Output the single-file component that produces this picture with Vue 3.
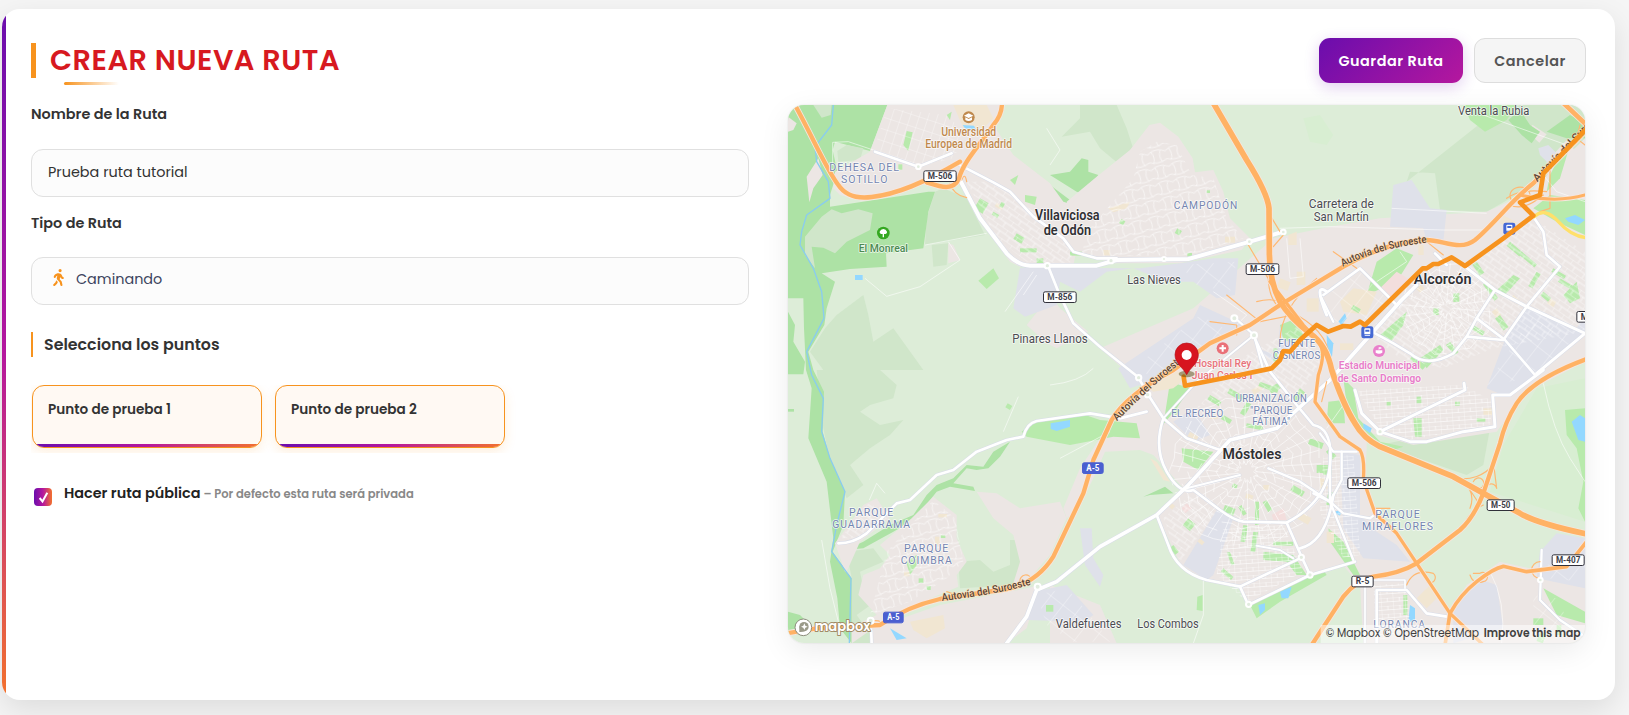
<script setup>
const points = ['Punto de prueba 1', 'Punto de prueba 2']

// All map geometry shares one coordinate space: three units per screen pixel.
const areas = [
  // pale woodland
  ['soft', '440,370 465,290 490,280 560,310 615,420 435,450'],
  ['soft', '455,450 505,445 500,510 460,515'],
  ['soft', '130,825 430,825 340,700 280,740 265,660 250,600 170,660 135,700 90,770'],
  ['soft', '110,825 300,825 350,870 340,910 270,930 240,950 300,990 370,975 330,1020 270,1060 210,1110 250,1170 200,1210 150,1100 130,1000'],
  ['soft', '900,30 1010,30 1040,100 1058,155 1020,210 960,160 930,110 845,125 900,70'],
  ['soft', '1880,260 2095,90 2220,30 2415,30 2415,170 2280,260 2120,350 1980,345 1965,235 1890,230'],
  ['soft', '535,1400 600,1395 640,1430 690,1410 690,1335 790,1335 780,1380 720,1470 540,1480'],
  ['soft', '200,1370 280,1360 310,1400 240,1430 250,1480 300,1510 230,1560 290,1645 215,1645 215,1450'],
  ['soft', '1800,1050 1990,1010 2130,1000 2110,1110 2060,1140'],
  // forest
  ['forest', '24,30 322,30 270,168 165,140 158,165 172,230 150,300 150,335 445,290 465,290 445,350 430,460 318,475 320,515 210,522 125,535 165,560 140,640 133,690 85,770 100,825 132,890 128,1010 150,1090 195,1190 190,1290 158,1370 215,1450 215,1645 180,1600 172,1510 150,1400 160,1330 140,1160 85,1030 95,880 78,825 72,700 70,610 24,610'],
  ['forest', '24,650 45,690 40,740 75,800 70,838 24,838'],
  ['forest', '24,1550 60,1560 90,1590 75,1620 24,1620'],
  ['forest', '24,942 42,942 42,950 24,950'],
  ['soft', '75,425 125,365 155,343 185,355 235,343 278,355 270,405 200,440 165,475 130,458 95,455 105,520 75,480'],
  ['soft', '172,168 200,150 250,160 240,195 175,200'],
  ['soft', '100,30 155,30 152,60 125,68'],
  ['urban', '80,245 115,190 128,240 100,280 88,322'],
  ['urban', '24,65 50,85 40,105 24,110'],
  ['forest', '810,240 870,230 905,190 925,195 925,230 955,240 935,270 940,305 890,290'],
  ['forest', '810,270 870,315 940,300 1000,280 1020,300 1085,295 1020,335 970,380 905,450 880,430 925,380 900,340 840,320'],
  ['forest', '195,1365 250,1340 330,1290 400,1260 440,1200 470,1170 520,1150 560,1110 610,1115 640,1070 690,1040 660,1085 625,1120 590,1125 560,1120 520,1165 580,1175 585,1188 510,1175 470,1190 430,1240 400,1275 340,1310 250,1360'],
  // built-up land
  ['urban', '322,30 665,30 640,90 700,180 765,230 810,265 850,320 930,345 895,445 880,510 720,515 690,500 600,380 545,260 480,240 350,290 285,300 250,318 180,300 160,280 165,230 270,170'],
  ['urban', '860,320 950,245 1050,165 1108,90 1140,83 1195,125 1238,190 1245,232 1300,225 1330,290 1350,370 1410,430 1385,465 1200,505 1000,505 890,470'],
  ['urban', '875,325 960,240 1060,165 1000,320 930,380'],
  ['urban', '165,1345 250,1230 290,1210 330,1270 240,1340 200,1430 215,1440 195,1430'],
  ['urban', '300,1350 395,1270 460,1205 530,1260 530,1330 560,1400 530,1440 535,1475 380,1540 280,1600 215,1645 215,1595 290,1560 235,1500 250,1440 300,1420 330,1380'],
  ['urban', '280,1600 480,1530 740,1480 780,1470 740,1600 680,1645 270,1645'],
  ['urban', '590,1190 650,1195 720,1240 840,1220 860,1270 810,1380 740,1460 700,1465 720,1400 700,1320 640,1270'],
  ['urban', '740,690 780,640 810,600 840,640 925,710 830,760 800,745'],
  ['urban', '1240,640 1480,430 1650,395 1800,370 2120,350 2250,290 2415,130 2415,800 2240,890 2150,1010 1900,1050 1760,1010 1760,1060 1740,1390 1590,1440 1405,1535 1375,1475 1280,1460 1205,1415 1150,1300 1130,1260 1215,1185 1120,1080 1080,1065 975,1070 940,1150 895,1240 860,1270 850,1240 900,1120 960,1030 1060,930 1095,880 960,760'],
  ['urban', '1720,1060 1780,1240 1900,1390 2010,1550 2060,1470 2160,1400 2250,1420 2415,1330 2415,1645 1750,1645 1740,1470 1680,1400 1620,1430 1640,1200'],
  ['urban', '2300,200 2360,135 2395,180 2415,240 2415,270 2330,300 2305,270'],
  ['urban', '2235,105 2258,90 2300,118 2278,143'],
  ['urban', '810,1470 960,1530 1010,1645 810,1645'],
  ['urban', '505,445 520,450 540,495 505,505'],
  // commerce
  ['work', '720,518 1080,520 1200,505 1300,490 1375,490 1365,600 1310,610 1240,560 1160,560 1060,520 980,530 900,590 840,560 830,630 735,665 700,640'],
  ['work', '1015,820 1240,670 1260,630 1390,690 1220,790 1110,860 1050,880'],
  ['work', '760,1490 860,1470 940,1560 910,1580 740,1575'],
  ['work', '900,1300 935,1300 940,1390 970,1440 960,1475 915,1410'],
  ['work', '1210,1410 1310,1245 1360,1270 1300,1440 1280,1455'],
  ['work', '1180,980 1240,940 1290,1020 1240,1040'],
  ['work', '1840,270 1895,255 1950,340 2000,345 1990,440 1940,440 1930,400 1830,395'],
  ['work', '2180,720 2240,640 2390,700 2415,660 2415,710 2270,840 2180,905 2120,880'],
  ['work', '1680,1070 1740,1080 1740,1260 1790,1310 1850,1350 1890,1400 1750,1390 1690,1300'],
  ['work', '2280,1370 2330,1315 2415,1330 2415,1480 2270,1450'],
  ['work', '2020,1520 2090,1450 2150,1470 2170,1600 2020,1645'],
  ['work', '2275,160 2305,150 2330,175 2305,205 2280,180'],
  ['work', '1430,760 1490,780 1500,690 1560,680 1570,740 1480,800'],
  // parks
  ['park', '2050,30 2210,30 2180,75 2115,110 2070,75'],
  ['forest', '2185,75 2220,45 2250,90 2280,110 2255,145 2225,120'],
  ['forest', '2300,110 2370,60 2415,85 2415,130 2360,130'],
  ['park', '2310,300 2415,315 2415,420 2330,380 2260,340'],
  ['park', '2310,240 2345,170 2370,150 2340,250 2300,290'],
  ['park', '595,557 640,520 657,550 620,582'],
  ['park', '725,1010 760,980 900,955 960,975 1070,985 1080,1030 1000,1025 870,1050 740,1025'],
  ['park', '1205,1060 1300,1070 1255,1125 1210,1100'],
  ['park', '378,1400 410,1380 410,1410 390,1440'],
  ['forest', '1090,1205 1155,1175 1180,1195 1110,1200'],
  ['park', '1410,1530 1630,1425 1640,1440 1500,1520 1430,1570'],
  ['park', '1450,1370 1540,1380 1580,1440 1550,1440 1520,1400 1450,1395'],
  ['park', '1252,1505 1268,1500 1268,1548 1250,1545'],
  ['park', '1645,920 1690,915 1695,985 1640,985'],
  ['park', '1690,850 1720,880 1735,970 1800,1040 1870,1055 1840,1065 1760,1020 1700,930'],
  ['park', '2355,945 2415,940 2415,1280 2395,1240 2410,1160 2390,1060 2360,1020'],
  ['park', '2290,1480 2415,1550 2415,1585 2330,1560'],
  ['park', '1645,1300 1690,1340 1740,1440 1720,1440 1650,1340'],
  ['park', '1500,690 1550,670 1570,720 1540,745 1510,735'],
  ['park', '1760,600 1790,500 1850,460 1900,480 1850,560'],
  ['park', '2350,600 2390,560 2400,610 2370,625'],
  ['park', '1800,720 1880,650 1870,690 1830,745'],
  ['park', '2145,590 2200,540 2220,550 2170,605'],
  ['park', '1920,790 1980,750 1990,765 1940,820'],
  ['park', '1140,1000 1150,990 1170,860 1230,880 1190,940'],
  ['park', '370,150 380,108 398,112 385,168'],
  ['park', '735,300 770,305 765,330 735,320'],
  ['park', '500,60 515,50 510,75'],
  ['park', '690,255 715,240 705,270'],
  ['park', '1900,970 1925,970 1925,1025 1905,1025'],
  // sand and leisure
  ['sand', '520,30 620,30 640,70 600,110 550,100'],
  ['sand', '390,1580 490,1560 495,1600 440,1630 400,1605'],
  ['sand', '1680,620 1720,580 1790,590 1760,660 1690,650'],
  ['sand', '1910,1510 1950,1470 1970,1510 1940,1540'],
  ['sand', '985,340 1050,320 1040,340 1000,352'],
  ['sand', '1525,420 1550,410 1550,450 1525,450'],
  ['sand', '1090,870 1180,825 1230,840 1180,880 1120,890'],
  ['sand', '1110,1090 1130,1100 1170,1160 1150,1155'],
  ['clinic', '1800,580 1850,530 1900,560 1830,620'],
  ['clinic', '1475,1260 1510,1240 1520,1275 1480,1275'],
  ['clinic', '1205,1240 1220,1225 1235,1240 1215,1255'],
  // water
  ['water', '225,540 248,540 248,555 225,555'],
  ['water', '548,90 582,92 590,108 555,100'],
  ['water', '812,985 870,975 870,995 830,1008 812,1002'],
  ['water', '1435,1530 1455,1525 1455,1545 1440,1560'],
  ['water', '1500,1490 1535,1475 1525,1510 1505,1510'],
  ['water', '2375,980 2400,960 2415,970 2415,1040 2395,1035'],
  ['water', '2355,370 2385,360 2415,375 2395,390 2365,380'],
  ['water', '1640,720 1660,745 1655,795 1642,780'],
  ['water', '1675,680 1695,655 1700,670 1685,690'],
  ['water', '1890,1530 1905,1540 1905,1580 1885,1580'],
  ['water', '330,1600 380,1630 350,1635'],
  ['water', '1750,985 1775,1000 1770,1015 1750,1000'],
  ['water', '1660,1250 1685,1245 1680,1262'],
]

const grids = [
  ['gA', '322,40 500,60 560,120 520,190 420,215 280,165'],
  ['gB', '560,260 640,260 790,370 880,460 870,505 740,500 650,430'],
  ['gC', '1060,250 1080,170 1130,140 1190,150 1235,240 1300,250 1340,370 1390,430 1230,480 900,485 930,400'],
  ['gC', '320,1370 460,1215 525,1270 550,1400 500,1450 390,1520 270,1560'],
  ['gB', '180,1330 270,1220 320,1270 230,1330'],
  ['gB', '1150,1270 1230,1200 1310,1250 1200,1400'],
  ['gD', '1330,1300 1510,1290 1570,1430 1400,1520 1310,1440'],
  ['gE', '1360,1300 1400,1300 1350,1450 1300,1440'],
  ['gD', '1730,885 2050,870 2140,920 2130,990 1890,1035 1800,1000'],
  ['gB', '2060,520 2260,370 2415,470 2415,710 2140,760 1990,820 1860,790 1760,710 1850,630'],
  ['gE', '1650,590 1740,530 1840,630 1750,690 1650,680'],
  ['gD', '1780,1470 1880,1465 1890,1590 1790,1645'],
  ['gE', '2120,870 2250,670 2400,720 2250,850'],
  ['gD', '1630,1080 1720,1080 1740,1380 1690,1390 1620,1250'],
  ['gE', '770,1500 860,1480 930,1560 990,1640 880,1640 800,1590'],
  ['gE', '1060,820 1260,660 1350,710 1130,850'],
  ['gE', '1200,510 1370,500 1350,590 1250,570'],
  ['gB', '1400,780 1560,690 1620,800 1560,900 1400,880 1250,940'],
  ['gE', '2260,1500 2330,1510 2390,1630 2260,1640'],
  ['gE', '2300,1410 2415,1380 2415,1460 2300,1450'],
]

// Streets fanning out of an old town: spokes and slightly irregular rings.
function fan(cx, cy, radius, spokes, rings) {
  let d = ''
  for (let i = 0; i < spokes; i++) {
    const a = (i / spokes) * Math.PI * 2
    const r0 = radius * (i % 2 ? 0.38 : 0.12)
    d += `M${(cx + Math.cos(a) * r0).toFixed()} ${(cy + Math.sin(a) * r0).toFixed()}L${(cx + Math.cos(a + 0.08) * radius).toFixed()} ${(cy + Math.sin(a + 0.08) * radius).toFixed()}`
  }
  for (let k = 1; k <= rings; k++) {
    for (let i = 0; i <= spokes; i++) {
      const a = (i / spokes) * Math.PI * 2
      const r = (radius * k) / rings + ((i * 7 + k * 5) % 5) * 4 - 8
      d += `${i && (i + k) % 6 ? 'L' : 'M'}${(cx + Math.cos(a) * r).toFixed()} ${(cy + Math.sin(a) * r).toFixed()}`
    }
  }
  return d
}
const fans = [fan(1400, 1130, 225, 34, 8), fan(2000, 640, 135, 24, 6)]

// Small green squares scattered through the towns: x, y, width, height, angle.
const squares = [
  [1180, 930, 26, 18, 40], [1290, 900, 40, 16, 30], [1350, 880, 50, 16, 30], [1400, 920, 16, 40, 30],
  [1440, 860, 60, 14, 20], [1500, 860, 18, 40, 60], [1560, 880, 20, 44, 40], [1330, 960, 30, 14, 30],
  [1400, 985, 50, 12, 10], [1590, 1030, 44, 18, 20], [1610, 1110, 40, 24, 0], [1540, 1170, 40, 18, 30],
  [1335, 1230, 34, 22, 20], [1425, 1220, 12, 70, 0], [1460, 1215, 34, 14, 60], [1390, 1290, 14, 50, 10],
  [1420, 1310, 14, 60, 8], [1225, 1270, 28, 26, 40], [1180, 1350, 26, 14, 50], [1350, 1370, 40, 10, 70],
  [1330, 1420, 40, 12, 40], [1480, 1340, 60, 12, 0], [1385, 1230, 30, 12, 60], [1360, 1165, 14, 12, 20],
  [2090, 500, 40, 16, 55], [2120, 560, 60, 14, 55], [2190, 440, 50, 16, 40], [2225, 470, 60, 12, 40],
  [2270, 530, 14, 50, 30], [2290, 590, 30, 14, 40], [2160, 660, 44, 18, 55], [2080, 690, 40, 14, 30],
  [2010, 740, 40, 16, 50], [1900, 780, 50, 16, 40], [1960, 640, 16, 20, 0], [2020, 595, 18, 26, 0],
  [2320, 520, 44, 12, 30], [2340, 550, 44, 12, 30], [1720, 630, 26, 14, 30], [1910, 905, 14, 20, 0],
  [2025, 920, 14, 12, 0], [1820, 920, 12, 12, 0], [2090, 970, 26, 10, 0], [1480, 760, 12, 40, 0],
  [600, 310, 30, 36, 30], [665, 320, 12, 16, 30], [710, 415, 28, 20, 30], [640, 350, 20, 10, 30],
  [720, 460, 50, 12, 0], [770, 490, 20, 14, 0], [870, 470, 36, 12, 0], [1192, 400, 16, 16, 30],
  [1024, 372, 14, 14, 30], [1222, 474, 14, 10, 0], [1280, 286, 10, 8, 0], [416, 1450, 14, 14, 0],
  [440, 1473, 12, 12, 0], [482, 1321, 14, 8, 0], [1630, 1120, 24, 20, 0], [1650, 1060, 30, 16, 50],
  [1645, 1190, 14, 40, 10], [2260, 1570, 30, 20, 0], [2280, 1610, 20, 30, 20], [2330, 1590, 14, 30, 0],
  [1870, 1500, 12, 60, 0], [798, 1530, 22, 20, 0], [355, 208, 12, 16, 0], [683, 925, 16, 14, 30],
]
const sands = [
  [1260, 1330, 18, 12, 40], [1170, 1220, 20, 14, 40], [1400, 1195, 22, 14, 20], [1230, 1010, 30, 16, 30],
  [1560, 1250, 40, 22, 30], [1450, 1170, 18, 14, 0], [1620, 1150, 22, 30, 0], [1335, 425, 30, 18, 0],
  [1440, 870, 16, 30, 60], [1290, 960, 24, 12, 0], [2150, 640, 24, 18, 55], [2200, 600, 30, 14, 40],
  [2310, 610, 22, 18, 30], [2110, 940, 34, 20, 0], [1910, 560, 30, 18, 40], [2170, 360, 44, 26, 30],
  [1680, 745, 40, 20, 0], [970, 465, 20, 16, 0], [650, 323, 24, 12, 30], [1640, 1310, 22, 34, 0],
  [475, 1257, 26, 10, 0], [465, 1325, 14, 26, 0], [372, 1430, 16, 14, 0], [1915, 450, 16, 30, 0],
  [1580, 610, 36, 40, 0], [1550, 530, 26, 40, 0], [1500, 550, 34, 28, 20],
]

const lanes = [
  'M158 210L158 142L205 140L280 165', 'M255 550L320 604L420 575L540 495L505 440', 'M435 450L620 415',
  'M675 650L760 530', 'M800 100L840 165L810 210', 'M125 1335L150 1480L180 1600', 'M268 1215L290 1165L315 1195',
  'M2360 150L2110 60', 'M2290 865Q2320 1010 2370 1090L2415 1160', 'M1835 340L2120 355', 'M1270 1455V1560L1240 1645',
  'M1500 400L1650 395L1990 405L2110 405', 'M2130 1430Q2180 1520 2165 1645', 'M840 1090L990 1010', 'M670 1010L715 905',
  'M1520 430L1530 550L1570 545L1560 430', 'M2290 240L2330 290L2415 320', 'M1300 590L1400 660L1370 690',
  'M810 870Q900 860 940 820', 'M1690 930L1640 1000', 'M730 600L770 540', 'M1860 470L1880 500L1790 560',
]
const roads = [
  ['M285 170L415 215L515 175', 8],
  ['M540 255L600 370L680 475Q715 512 750 512H950L1010 495L1225 492L1410 440L1510 410', 12],
  ['M530 205L640 262L690 290L760 365L850 430L880 470L950 490H1010', 8],
  ['M805 515L835 590L880 685L960 755L1075 847L1105 900L1150 970L1220 1030L1320 1065', 8],
  ['M175 1345Q220 1345 260 1315L350 1225L390 1215L470 1140L520 1125L590 1070L680 1035L730 1025Q740 985 770 978L930 955L1020 970L1100 950', 8],
  ['M680 1645L740 1565L770 1485L830 1460L960 1355L1130 1260L1220 1175L1350 1035L1490 1000L1550 945L1650 855L1860 620L1910 570', 11],
  ['M1150 970Q1120 1060 1160 1130T1240 1185L1320 1245Q1360 1275 1390 1280L1520 1283Q1640 1220 1650 1110T1600 990L1550 930L1470 830L1420 720', 8],
  ['M1220 1180L1380 1140', 6], ['M1465 1120L1560 1160L1650 1220', 7],
  ['M1130 1260L1165 1350Q1190 1430 1280 1455L1380 1475L1405 1530L1590 1440L1560 1375L1520 1283', 8],
  ['M1380 1475L1560 1390', 8], ['M1430 1352L1500 1365L1540 1390', 6], ['M1590 1440L1725 1400', 8],
  ['M1660 1200Q1640 1340 1560 1360', 8],
  ['M1725 885L1745 955L1800 1010L1890 1040H1940L2050 1010L2145 995L2138 900H2190L2290 825', 9],
  ['M1800 1010L2055 885L2052 865', 9],
  ['M1630 600L1740 520L1850 630', 8], ['M2055 515L2145 585L2240 635L2415 715L2270 835', 9],
  ['M2260 365L2290 410L2300 480L2340 515L2240 635L2170 735L2060 725L2020 775Q1940 820 1890 775L1840 745L1785 715', 8],
  ['M2145 585L2090 670L2060 725', 8], ['M2090 670L2175 735L2265 840', 8], ['M1965 475L2000 510', 8],
  ['M1620 600L1660 680', 7], ['M1650 1070V1220L1720 1395', 7], ['M1620 1015L1660 1070H1730', 7],
  ['M1685 1070V1155L1650 1220L1690 1255L1770 1270L1800 1245', 7], ['M1600 1195L1650 1220', 7],
  ['M1790 1645V1485H1880L1940 1555L2000 1565', 8], ['M1755 1645V1455H1875V1480', 5],
  ['M2285 1365L2280 1515L2340 1575L2415 1625', 7], ['M1640 590Q1600 560 1640 660', 9],
  ['M1363 667L1422 720L1450 825', 7], ['M1422 720L1250 860L1150 970', 6], ['M270 1575Q275 1610 275 1645', 8],
]
const ramps = [
  'M1470 560L1405 450M1510 420L1480 455M1470 470Q1450 600 1500 640M1470 360L1500 410',
  'M2180 310Q2220 280 2300 290M2190 330Q2230 350 2290 300M2310 200V340L2280 350M2200 320A30 25 0 1 1 2250 300',
  'M2030 1150A120 120 0 0 0 2140 1110M2080 1160A16 16 0 1 1 2100 1180M2120 1190A16 16 0 1 1 2150 1180L2140 1100M2040 1150Q2090 1190 2070 1240M2110 1230A120 100 0 0 0 2050 1300M2060 1170L2100 1230',
  'M2070 1440Q2080 1470 2110 1460A14 14 0 1 0 2100 1435H2080M1880 1470Q1900 1420 1960 1435A14 14 0 1 1 1940 1460',
  'M720 1460A17 17 0 1 1 755 1455M270 1580Q300 1570 310 1590M500 1490L530 1500M2280 1450A24 24 0 0 1 2280 1400',
  'M510 265Q520 300 560 308M545 255Q555 230 560 260M1290 680L1370 690V720M1780 1240H1830M2400 90L2390 130L2415 150',
  'M1610 550Q1500 640 1500 740M1530 650Q1640 700 1650 790M1620 1130M1430 620Q1500 600 1540 650M1640 860L1625 920',
  'M1340 600L1440 680L1540 660M1660 470L1730 520M1940 440L1990 480',
]
const highways = [
  ['M45 30C100 130 140 225 175 270Q205 315 275 306C350 298 430 265 540 200', 13],
  ['M440 262C480 275 520 290 537 250C550 200 600 150 640 90Q666 60 666 24', 13],
  ['M2220 300Q2330 325 2415 300', 9], ['M2350 24L2425 95', 14],
  ['M2425 790Q2260 850 2210 925Q2175 980 2160 1045L2110 1195Q2080 1270 2040 1305L1910 1405Q1860 1435 1780 1445Q1730 1455 1690 1505L1595 1650', 13],
  ['M1470 560L1570 690L1615 740Q1640 770 1615 840L1605 920L1680 1025L1740 1065Q1755 1090 1750 1155L1785 1255L1850 1315L2010 1555L2110 1650', 10],
  ['M1995 1650L2010 1555Q2040 1500 2090 1460T2170 1414L2240 1430L2360 1415L2420 1340', 11],
  ['M20 1615L110 1600L300 1590Q380 1535 480 1512L640 1488Q760 1480 820 1385L910 1195L940 1095L995 975Q1040 900 1180 825L1290 745L1410 690L1500 630L1690 515Q1820 440 1940 435C1990 435 2040 470 2085 435C2140 390 2200 310 2260 265L2415 110', 13],
  ['M1300 24L1400 195Q1463 295 1467 340L1468 470Q1468 560 1500 620Q1530 670 1590 715Q1640 750 1655 825Q1690 930 1725 985Q1750 1030 1800 1055L2020 1145L2110 1195L2220 1255Q2270 1285 2420 1317', 17],
]

const labels = [
  [566, 122, 165, 'Universidad', 'school'], [566, 160, 260, 'Europea de Madrid', 'school'],
  [254, 229, 212, 'DEHESA DEL', 'zone'], [254, 265, 142, 'SOTILLO', 'zone'],
  [310, 471, 148, 'El Monreal', 'wood'],
  [862, 376, 194, 'Villaviciosa', 'city'], [862, 420, 142, 'de Odón', 'city'],
  [1278, 341, 193, 'CAMPODÓN', 'zone'], [1122, 566, 161, 'Las Nieves', 'place'],
  [810, 745, 226, 'Pinares Llanos', 'place'],
  [1684, 340, 195, 'Carretera de', 'place'], [1684, 378, 165, 'San Martín', 'place'],
  [2141, 59, 214, 'Venta la Rubia', 'place'], [1988, 567, 173, 'Alcorcón', 'city'],
  [1551, 756, 112, 'FUENTE', 'zone tight'], [1550, 791, 144, 'CISNEROS', 'zone tight'],
  [1328, 816, 172, 'Hospital Rey', 'health'], [1326, 853, 182, 'Juan Carlos I', 'health'],
  [1798, 822, 243, 'Estadio Municipal', 'sport'], [1798, 862, 250, 'de Santo Domingo', 'sport'],
  [1252, 965, 157, 'EL RECREO', 'zone tight'], [1474, 921, 214, 'URBANIZACIÓN', 'zone tight'],
  [1474, 957, 128, '"PARQUE', 'zone tight'], [1474, 991, 115, 'FÁTIMA"', 'zone tight'],
  [1416, 1091, 177, 'Móstoles', 'city'],
  [275, 1262, 136, 'PARQUE', 'zone'], [275, 1298, 236, 'GUADARRAMA', 'zone'],
  [440, 1371, 136, 'PARQUE', 'zone'], [440, 1408, 156, 'COIMBRA', 'zone'],
  [926, 1598, 197, 'Valdefuentes', 'place'], [1164, 1598, 184, 'Los Combos', 'place'],
  [1854, 1269, 136, 'PARQUE', 'zone'], [1854, 1306, 216, 'MIRAFLORES', 'zone'],
  [1859, 1598, 158, 'LORANCA', 'zone'],
]
const shields = [
  [430, 226, 100, 'M-506'], [789, 589, 101, 'M-856'], [1397, 505, 101, 'M-506'], [1702, 1147, 101, 'M-506'],
  [2120, 1213, 84, 'M-50'], [2315, 1378, 99, 'M-407'], [1714, 1442, 67, 'R-5'], [2389, 648, 100, 'M-406'],
  [309, 1550, 62, 'A-5', 'blue'], [906, 1102, 65, 'A-5', 'blue'],
]
</script>

<template>
  <main class="card">
    <header class="head">
      <h1 class="title"><span>CREAR NUEVA RUTA</span></h1>
      <div class="actions">
        <button class="btn save">Guardar Ruta</button>
        <button class="btn cancel">Cancelar</button>
      </div>
    </header>

    <div class="columns">
      <section class="form">
        <label class="label name">Nombre de la Ruta</label>
        <div class="field"><span class="value">Prueba ruta tutorial</span></div>
        <label class="label type">Tipo de Ruta</label>
        <div class="field">
          <svg class="walk" viewBox="0 0 320 512"><path d="M160 48a48 48 0 1 1 96 0 48 48 0 1 1-96 0zM126.500 199.300c-1 .4-1.900 .8-2.900 1.200l-8 3.500c-16.400 7.300-29 21.200-34.700 38.200l-2.600 7.800c-5.600 16.800-23.700 25.800-40.500 20.200S12 246.500 17.600 229.700l2.600-7.800c11.400-34.100 36.600-61.900 69.400-76.500l8-3.500c20.800-9.200 43.300-14 66.100-14c44.600 0 84.800 26.800 101.900 67.900L281 232.700l21.400 10.700c15.800 7.900 22.200 27.100 14.300 42.900s-27.100 22.200-42.900 14.300L247 287.300c-10.300-5.200-18.400-13.800-22.800-24.500l-9.600-23-19.300 65.500 49.500 54c5.400 5.900 9.200 13 11.200 20.800l23 92.100c4.300 17.100-6.100 34.500-23.300 38.800s-34.500-6.100-38.800-23.300l-22-88.100-70.700-77.100c-14.800-16.100-20.300-38.600-14.700-59.700l16.900-63.500zM68.700 398l25-62.400c2.100 3 4.500 5.800 7 8.600l40.700 44.400-14.500 36.200c-2.400 6-6 11.500-10.600 16.100L54.600 502.600c-12.500 12.500-32.800 12.500-45.300 0s-12.500-32.800 0-45.300L68.700 398z" /></svg>
          <span class="mode">Caminando</span>
        </div>
        <h2 class="subtitle"><span>Selecciona los puntos</span></h2>
        <div class="points">
          <div v-for="p in points" :key="p" class="point">{{ p }}</div>
        </div>
        <div class="public">
          <span class="check">
            <svg viewBox="0 0 18 18"><path d="M5.600 10L8.500 13.500L13.300 4.800" /></svg>
          </span>
          <strong>Hacer ruta pública</strong>
          <small>– Por defecto esta ruta será privada</small>
        </div>
      </section>

      <section class="map">
        <svg viewBox="24 30 2391 1614" preserveAspectRatio="none">
          <defs>
            <pattern id="gA" width="26" height="34" patternUnits="userSpaceOnUse" patternTransform="rotate(18)"><path class="street" d="M0 0H26M0 0V34" /></pattern>
            <pattern id="gB" width="36" height="30" patternUnits="userSpaceOnUse" patternTransform="rotate(35)"><path class="street" d="M0 0H36M0 0V15M18 15V30M0 15H36" /></pattern>
            <pattern id="gC" width="54" height="48" patternUnits="userSpaceOnUse" patternTransform="rotate(-14)"><path class="street" d="M0 10Q27 -8 54 10M0 34Q27 46 54 34M12 4Q22 24 12 40M40 4Q30 24 40 40" /></pattern>
            <pattern id="gD" width="36" height="24" patternUnits="userSpaceOnUse" patternTransform="rotate(-4)"><path class="street" d="M0 0H36M0 0V24M20 0V12M0 12H36" /></pattern>
            <pattern id="gE" width="46" height="62" patternUnits="userSpaceOnUse" patternTransform="rotate(38)"><path class="street" d="M0 0H46M0 0V62" /></pattern>
            <path id="sw" d="M1011 979Q1090 895 1220 790" />
            <path id="mid" d="M1688 515Q1810 455 1946 443" />
            <path id="low" d="M486 1518Q640 1500 758 1468" />
            <path id="ne" d="M2272 262L2440 88" />
          </defs>
          <rect class="land" x="20" y="20" width="2410" height="1640" />
          <polygon class="glade" points="1570,70 1620,60 1660,120 1640,150 1590,140" />
          <polygon class="glade" points="2170,1050 2270,880 2415,850 2415,1280 2130,1190" />
          <polygon v-for="(a, i) in areas" :key="i" :class="a[0]" :points="a[1]" />
          <rect v-for="(s, i) in sands" :key="'s' + i" class="sand" :x="s[0]" :y="s[1]" :width="s[2]" :height="s[3]" :transform="`rotate(${s[4]} ${s[0]} ${s[1]})`" />
          <rect v-for="(s, i) in squares" :key="'q' + i" class="park" :x="s[0]" :y="s[1]" :width="s[2]" :height="s[3]" :transform="`rotate(${s[4]} ${s[0]} ${s[1]})`" />
          <polygon v-for="(g, i) in grids" :key="'g' + i" :points="g[1]" :fill="`url(#${g[0]})`" />
          <path v-for="(d, i) in fans" :key="'f' + i" class="street" :d="d" />
          <path v-for="(d, i) in lanes" :key="'l' + i" class="street" :d="d" />
          <path class="river" d="M160 30L155 90L105 155L110 200L145 260L150 310L80 360L65 410L60 450L100 520L125 590L132 670L80 770L95 840L130 910L125 1010L150 1090L195 1190L170 1290L155 1370L213 1450L208 1645" />
          <g class="lines">
            <path v-for="(r, i) in roads" :key="'c' + i" class="casing" :d="r[0]" :stroke-width="r[1] + 3" />
            <path v-for="(r, i) in roads" :key="'r' + i" class="road" :d="r[0]" :stroke-width="r[1]" />
            <path v-for="(d, i) in ramps" :key="'p' + i" class="ramp" :d="d" />
            <path class="avenue" d="M2262 365Q2295 335 2335 380T2420 428" />
            <path v-for="(h, i) in highways" :key="'k' + i" class="edge" :d="h[0]" :stroke-width="h[1] + 5" />
            <path v-for="(h, i) in highways" :key="'h' + i" class="highway" :d="h[0]" :stroke-width="h[1]" />
          </g>
          <g class="junctions">
            <circle cx="802" cy="512" r="8" /><circle cx="993" cy="497" r="8" /><circle cx="1152" cy="492" r="6" />
            <circle cx="1408" cy="440" r="7" /><circle cx="1510" cy="411" r="7" /><circle cx="1363" cy="670" r="9" />
            <circle cx="1422" cy="721" r="9" /><circle cx="1076" cy="848" r="8" /><circle cx="1103" cy="899" r="8" />
            <circle cx="415" cy="215" r="7" /><circle cx="773" cy="1475" r="9" /><circle cx="1406" cy="1528" r="8" />
            <circle cx="1590" cy="1440" r="8" /><circle cx="1564" cy="1387" r="8" /><circle cx="2281" cy="1455" r="7" />
            <circle cx="1800" cy="1010" r="8" /><circle cx="272" cy="1577" r="9" />
          </g>

          <g class="onroad">
            <text textLength="270" lengthAdjust="spacingAndGlyphs"><textPath href="#sw">Autovía del Suroeste</textPath></text>
            <text textLength="264" lengthAdjust="spacingAndGlyphs"><textPath href="#mid">Autovía del Suroeste</textPath></text>
            <text textLength="272" lengthAdjust="spacingAndGlyphs"><textPath href="#low">Autovía del Suroeste</textPath></text>
            <text><textPath href="#ne">Autovía del Suro</textPath></text>
          </g>
          <text v-for="(l, i) in labels" :key="'t' + i" :class="['lab', l[4]]" :x="l[0]" :y="l[1]" :textLength="l[2]" lengthAdjust="spacingAndGlyphs">{{ l[3] }}</text>
          <g v-for="(s, i) in shields" :key="'sh' + i" :class="['shield', s[4]]">
            <rect :x="s[0] + 1.500" :y="s[1] + 1.500" :width="s[2] - 3" height="32" rx="5" />
            <text :x="s[0] + s[2] / 2" :y="s[1] + 26" :textLength="s[2] - 26" lengthAdjust="spacingAndGlyphs">{{ s[3] }}</text>
          </g>

          <g class="poi">
            <circle cx="566" cy="67" r="18" fill="#bf894d" /><path fill="#fff" d="M566 55L580 62L566 69L552 62ZM556 67L566 72L576 67V75Q566 81 556 75Z" />
            <circle cx="310" cy="414" r="19" fill="#35a821" /><path fill="#fff" d="M308 427V417Q298 417 299 410Q302 402 310 402T321 410Q322 417 312 417V427Z" />
            <circle cx="1328" cy="760" r="18" fill="#ea7078" /><path fill="#fff" d="M1325 750H1331V757H1338V763H1331V770H1325V763H1318V757H1325Z" />
            <circle cx="1797" cy="768" r="18" fill="#e97fcb" /><path fill="#fff" d="M1787 766H1807V773Q1797 779 1787 773ZM1796 757H1804V761H1798V764H1796Z" />
            <g v-for="(t, i) in [[2170, 383], [1744, 694]]" :key="i" :transform="`translate(${t[0]} ${t[1]})`">
              <rect width="36" height="36" rx="7" fill="#4569d4" /><path fill="#fff" fill-rule="evenodd" d="M9 8Q9 6 12 6H24Q27 6 27 8V24H9ZM12 10V16H24V10ZM10 27H26V29H10Z" />
            </g>
          </g>

          <path class="route" d="M2420 100L2290 235L2280 300L2220 322L2260 362L2170 430L2055 513L2015 487L1975 507H1960L1940 520H1928L1755 690L1740 680L1712 695L1690 693L1645 710L1610 690L1560 735L1530 770L1510 768L1500 795L1475 820L1390 838L1215 872L1211 845" />
          <ellipse cx="1220" cy="837" rx="24" ry="10" fill="#5a4a14" opacity=".5" />
          <path fill="#d7141f" stroke="#b3101a" stroke-width="2" d="M1220 744A35 35 0 0 0 1185 779C1185 805 1208 816 1220 839C1232 816 1255 805 1255 779A35 35 0 0 0 1220 744Z" />
          <circle cx="1220" cy="780" r="15" fill="#fff" />

          <g class="logo">
            <circle cx="70" cy="1597" r="25" fill="#fff" stroke="#8c8c7c" stroke-width="3" />
            <circle cx="72" cy="1595" r="14" fill="#9b9b8a" /><path fill="#9b9b8a" d="M58 1593V1611Q68 1612 76 1608Z" />
            <path fill="#fff" d="M73 1585L76 1592L83 1595L76 1598L73 1605L70 1598L63 1595L70 1592Z" />
            <text x="104" y="1609" textLength="167" lengthAdjust="spacingAndGlyphs">mapbox</text>
          </g>
          <rect x="1622" y="1590" width="800" height="60" fill="#fff" opacity=".5" />
          <text class="credit" x="1637" y="1625" textLength="460" lengthAdjust="spacingAndGlyphs">© Mapbox © OpenStreetMap</text>
          <text class="credit strong" x="2111" y="1625" textLength="291" lengthAdjust="spacingAndGlyphs">Improve this map</text>
        </svg>
      </section>
    </div>
  </main>
</template>

<style>
body { margin: 0; background: #f5f5f5; overflow: hidden; }
#app { display: flow-root; }
</style>

<style scoped>
.card {
  position: relative; box-sizing: border-box; height: 691px; margin: 9px 14px 15px 2px;
  padding: 29px 29px 0; background: #fff; border-radius: 18px;
  box-shadow: 0 10px 30px rgba(0, 0, 0, .1); font-family: Poppins, Inter, sans-serif; color: #333;
}
.card::before {
  content: ''; position: absolute; inset: 0; border-radius: 18px;
  background: linear-gradient(180deg, #6a0dad, #b5179e 50%, #f3722c) left / 4px 100% no-repeat;
}
.head { position: relative; display: flex; justify-content: space-between; height: 67px; }
.title {
  position: relative; margin: 5px 0 0; height: 35px; padding-left: 14px; border-left: 5px solid #f7931e;
  color: #d71920; font-size: 28.800px; font-weight: 600; line-height: 35px; letter-spacing: .5px; white-space: nowrap;
}
.title::after {
  content: ''; position: absolute; left: 28px; top: 39px; width: 55px; height: 3px; border-radius: 2px;
  background: linear-gradient(90deg, #f7931e, transparent);
}
.actions { display: flex; gap: 11px; height: 45px; }
.btn {
  box-sizing: border-box; height: 45px; padding: 0; border: 0; border-radius: 11px;
  font: 600 14.400px/40px Poppins, Inter, sans-serif; letter-spacing: .5px; white-space: nowrap;
}
.save { width: 144px; color: #fff; background: linear-gradient(135deg, #6a0dad, #b5179e); box-shadow: 0 4px 15px rgba(106, 13, 173, .2); }
.cancel { width: 112px; color: #555; background: #f5f5f5; border: 1px solid #ddd; }
.columns { display: grid; grid-template-columns: 718px 797px; gap: 39px; }
.form { display: flex; flex-direction: column; }
.label { height: 44px; font-size: 14.400px; font-weight: 600; line-height: 19px; }
.type { height: 42px; margin-top: 13px; padding-top: 5px; line-height: 17px; }
.field {
  box-sizing: border-box; display: flex; align-items: center; height: 48px; padding: 0 16px 2px;
  background: #fcfcfc; border: 1px solid #e0e0e0; border-radius: 12px; font-size: 14.400px;
}
.walk { width: 11px; height: 17px; margin: 0 12px 6px 5px; fill: #f7931e; }
.mode { color: #3c4560; padding-bottom: 1px; }
.subtitle {
  margin: 27px 0 28px; height: 25px; padding-left: 11px; border-left: 2px solid #f7931e;
  font-size: 15.840px; font-weight: 600; line-height: 25px;
}
.points { display: grid; grid-template-columns: 230px 230px; gap: 13px; height: 68px; padding-left: 1px; overflow: hidden; }
.point {
  position: relative; box-sizing: border-box; height: 63px; padding: 14px 15px; overflow: hidden;
  background: #fff9f3; border: 1px solid #f7931e; border-radius: 12px; font-size: 13.600px; font-weight: 600; line-height: 20px;
  box-shadow: 0 4px 12px rgba(247, 147, 30, .15);
}
.point::after {
  content: ''; position: absolute; left: 0; right: 0; bottom: 0; height: 3px;
  background: linear-gradient(90deg, #6a0dad, #b5179e 50%, #f3722c);
}
.public { display: flex; align-items: baseline; margin-top: 29px; padding-left: 3px; white-space: nowrap; }
.check { align-self: flex-start; width: 18px; height: 18px; margin: 6px 12px 0 0; border-radius: 4px; background: linear-gradient(90deg, #6a0dad, #b5179e 50%, #f3722c); }
.check svg { display: block; width: 18px; height: 18px; fill: none; stroke: #fff; stroke-width: 2; }
.public strong { color: #222; font-size: 14.400px; font-weight: 600; line-height: 22px; }
.public small { margin-left: 3px; color: #888; font-size: 11.520px; font-weight: 600; }
.map { height: 538px; border-radius: 16px; overflow: hidden; box-shadow: 0 8px 30px rgba(0, 0, 0, .08), 0 0 2px rgba(0, 0, 0, .12); }
.map svg { display: block; width: 797px; height: 538px; font-family: Roboto, "Noto Sans", sans-serif; }

.land { fill: #ddedd8; }
.glade { fill: #d8eed2; }
.soft { fill: #d0e6ca; }
.forest { fill: #ade2a5; }
.park { fill: #b8eaac; }
.urban { fill: #ece6e4; }
.work { fill: #dfe1ea; }
.sand { fill: #f1e6d2; }
.clinic { fill: #f3dedd; }
.water { fill: #93d8ff; }
.street { fill: none; stroke: #fff; stroke-width: 2.600; opacity: .65; }
.river { fill: none; stroke: #8accef; stroke-width: 4; stroke-linejoin: round; }
.lines path { fill: none; stroke-linecap: round; stroke-linejoin: round; }
.lines .casing { stroke: #d9dde8; }
.lines .road { stroke: #fff; }
.lines .ramp { stroke: #ffb872; stroke-width: 3.500; }
.lines .avenue { stroke: #ffe06a; stroke-width: 10; }
.lines .edge { stroke: #f6e6df; }
.lines .highway { stroke: #ffb264; }
.junctions circle { fill: #e2ecdf; stroke: #fff; stroke-width: 6; }
.route { fill: none; stroke: #f7931e; stroke-width: 14; stroke-linejoin: round; stroke-linecap: round; }
.lab { text-anchor: middle; paint-order: stroke; stroke: rgba(255, 255, 255, .75); stroke-width: 5; stroke-linejoin: round; }
.place { fill: #4c4c52; font-size: 37px; font-weight: 400; }
.city { fill: #303034; font-size: 44px; font-weight: 600; }
.zone { fill: #7485b0; font-size: 33px; font-weight: 400; letter-spacing: 3px; }
.tight { letter-spacing: 1px; }
.school { fill: #bf894d; font-size: 36px; font-weight: 500; }
.wood { fill: #4c8a52; font-size: 35px; font-weight: 500; }
.health { fill: #e8727a; font-size: 35px; font-weight: 500; }
.sport { fill: #e87cc9; font-size: 34px; font-weight: 600; }
.onroad text { fill: #5b4636; font-size: 32px; font-weight: 500; paint-order: stroke; stroke: rgba(255, 225, 190, .8); stroke-width: 4; }
.shield rect { fill: #fff; stroke: #30303a; stroke-width: 3; }
.shield text { fill: #3c3c46; font-size: 25px; font-weight: 700; text-anchor: middle; }
.blue rect { fill: #4a5fd0; stroke: #4a5fd0; }
.blue text { fill: #fff; }
.logo text { fill: #fff; font-family: Poppins, Inter, sans-serif; font-size: 41px; font-weight: 600; paint-order: stroke; stroke: #a08b66; stroke-width: 6; stroke-linejoin: round; }
.credit { fill: #404040; font-family: Poppins, Inter, sans-serif; font-size: 35px; }
.strong { font-weight: 600; }
</style>
